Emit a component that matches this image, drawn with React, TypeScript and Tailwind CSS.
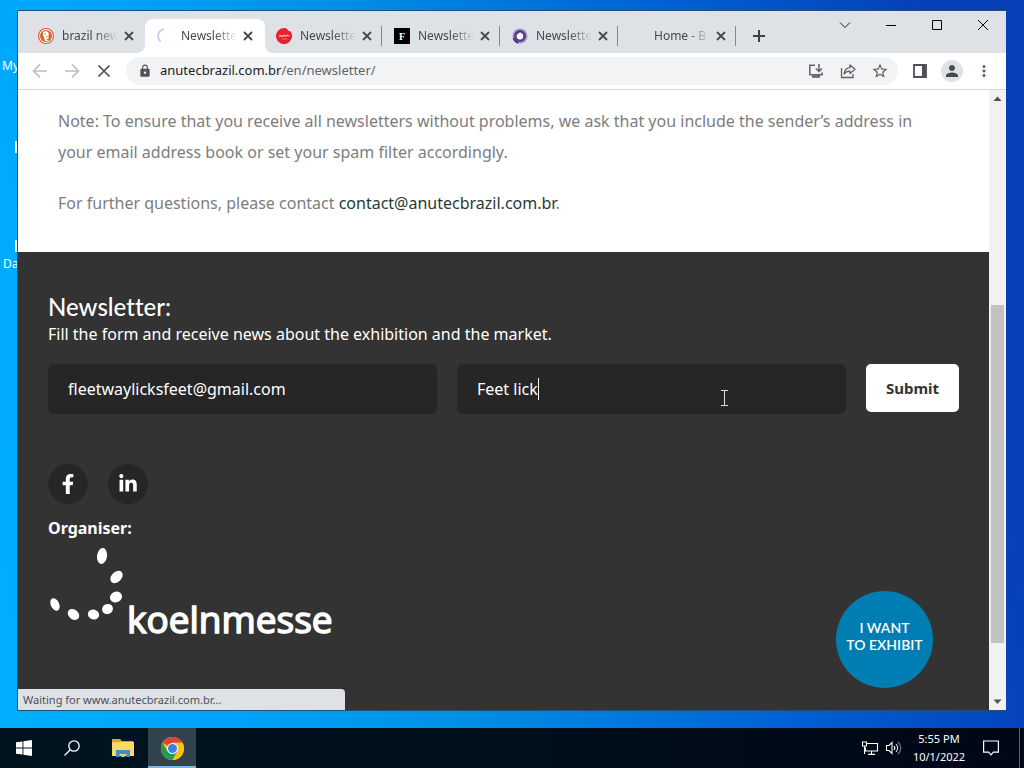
import { useState } from "react"
import type { ReactNode } from "react"
import { FaFacebookF, FaLinkedinIn } from "react-icons/fa"
import { MdLock, MdStarBorder, MdPerson, MdMoreVert } from "react-icons/md"

type Tab = {
  title: string
  icon: ReactNode
  active?: boolean
}

const tabs: Tab[] = [
  { title: "brazil new", icon: <DuckIcon /> },
  { title: "Newslette", icon: <SpinnerIcon />, active: true },
  { title: "Newslette", icon: <RedIcon /> },
  { title: "Newslette", icon: <LetterIcon /> },
  { title: "Newslette", icon: <RingIcon /> },
  { title: "Home - B", icon: null },
]

function DuckIcon() {
  return (
    <svg viewBox="0 0 16 16" className="size-4">
      <circle cx="8" cy="8" r="8" fill="#d9582f" />
      <circle cx="8" cy="8" r="6.9" fill="#fff" />
      <circle cx="8" cy="8" r="6" fill="#d9622f" />
      <path d="M5 5C5.200 3 8.800 2.400 10.300 4.600c.8 1.300.5 3 .1 4.200l.4 3.800c-1.400.9-2.600.9-3.600.4L5.800 9C5 7.600 4.800 6.400 5 5z" fill="#fff" />
      <path d="M7.600 8.200l3.600-.4-.6 1.200-2.800.4z" fill="#f2b632" />
      <path d="M8.600 10.800l2.600.2-.4 1.600-1.800-.4z" fill="#5aa34a" />
      <circle cx="7.200" cy="6" r=".6" fill="#444" />
    </svg>
  )
}

function SpinnerIcon() {
  return (
    <svg viewBox="0 0 16 16" className="size-4" fill="none">
      <path d="M7 1.200A7 7 0 0 0 3.600 13.400" stroke="#b9d3ee" strokeWidth="1.800" />
    </svg>
  )
}

function RedIcon() {
  return (
    <svg viewBox="0 0 16 16" className="size-4">
      <path d="M8 0c2.300 0 3 .6 3.400 1.600.6 1.400 1.800 1.700 3.400 2.200A8 8 0 1 1 8 0z" fill="#e8202f" />
      <path d="M3 8.600l2-1 1.400.8 1.600-1.200 1.600 1 1.800-1 2 .8" stroke="#f9b3b8" strokeWidth="1.300" fill="none" />
      <path d="M6 11h5" stroke="#f07b84" strokeWidth=".8" />
    </svg>
  )
}

function LetterIcon() {
  return (
    <span className="flex size-4 items-center justify-center bg-black font-['Liberation_Serif',serif] text-[10px] font-bold text-white">
      F
    </span>
  )
}

function RingIcon() {
  return (
    <svg viewBox="0 0 16 16" className="size-4">
      <circle cx="8" cy="8" r="7.600" fill="#a99ac6" />
      <circle cx="8" cy="8" r="6" fill="#5b3a8c" />
      <path d="M8 4.200L11.200 6.600l-.4 4L8 11.800 5 10.400 4.600 7z" fill="#fff" />
      <path d="M1.500 10a7 7 0 0 0 5 5" stroke="#3c2470" strokeWidth="1.400" fill="none" />
    </svg>
  )
}

function CloseIcon() {
  return (
    <svg viewBox="0 0 14 14" className="size-3.5" stroke="#45494d" strokeWidth="1.800">
      <path d="M3 3l8 8M11 3l-8 8" />
    </svg>
  )
}

function BrowserTab({ tab }: { tab: Tab }) {
  return (
    <div
      className={
        tab.active
          ? "relative -mr-px ml-px flex h-[34px] w-[120px] shrink-0 items-center rounded-t-lg bg-white pl-3"
          : "flex h-[34px] w-[118px] shrink-0 items-center pl-3"
      }
    >
      {tab.active && (
        <>
          <svg viewBox="0 0 8 8" className="absolute bottom-0 -left-2 size-2">
            <path d="M8 0v8H0a8 8 0 0 0 8-8z" fill="#fff" />
          </svg>
          <svg viewBox="0 0 8 8" className="absolute -right-2 bottom-0 size-2">
            <path d="M0 0v8h8a8 8 0 0 1-8-8z" fill="#fff" />
          </svg>
        </>
      )}
      <span className="mr-2 size-4 shrink-0">{tab.icon}</span>
      <span className="w-14 shrink-0 text-xs whitespace-nowrap text-[#45494d] [mask-image:linear-gradient(to_right,#000_60%,transparent)]">
        {tab.title}
      </span>
      <button aria-label="Close tab" className="ml-1">
        <CloseIcon />
      </button>
    </div>
  )
}

function TabStrip() {
  return (
    <div className="flex h-[42px] items-start bg-[#dee1e6]">
      <div className="flex min-w-0 flex-1 items-center pt-2 pl-2">
        {tabs.map((tab, i) => (
          <div key={i} className="flex shrink-0 items-center">
            <BrowserTab tab={tab} />
            {i > 1 && <span className="-ml-px h-5 w-px bg-[#85898e]" />}
          </div>
        ))}
        <button aria-label="New tab" className="ml-4">
          <svg viewBox="0 0 14 14" className="size-3.5" stroke="#3c4043" strokeWidth="2">
            <path d="M7 1v12M1 7h12" />
          </svg>
        </button>
      </div>
      <div className="flex shrink-0">
        <button aria-label="Search tabs" className="flex h-7 w-[46px] items-center justify-center">
          <svg viewBox="0 0 12 12" className="size-3" fill="none" stroke="#222">
            <path d="M1 3.500l5 5 5-5" />
          </svg>
        </button>
        <button aria-label="Minimize" className="flex h-7 w-[46px] items-center justify-center">
          <svg viewBox="0 0 10 10" className="size-2.5" stroke="#000">
            <path d="M0 5.500h10" />
          </svg>
        </button>
        <button aria-label="Maximize" className="flex h-7 w-[46px] items-center justify-center">
          <svg viewBox="0 0 10 10" className="size-2.5" fill="none" stroke="#000">
            <path d="M.5.5h9v9h-9z" />
          </svg>
        </button>
        <button aria-label="Close" className="flex h-7 w-[46px] items-center justify-center">
          <svg viewBox="0 0 12 12" className="size-3" stroke="#000">
            <path d="M1 1l10 10M11 1L1 11" />
          </svg>
        </button>
      </div>
    </div>
  )
}

function ToolButton({ label, children }: { label: string; children: ReactNode }) {
  return (
    <button aria-label={label} className="flex size-8 shrink-0 items-center justify-center text-[#5f6368]">
      {children}
    </button>
  )
}

function Toolbar() {
  return (
    <div className="flex h-[37px] items-center border-b border-[#d5d7da] bg-white px-1.5">
      <ToolButton label="Back">
        <svg viewBox="0 0 16 16" className="size-4" fill="none" stroke="#bcbec1" strokeWidth="1.700">
          <path d="M15 8H2M8 1.500L1.500 8 8 14.500" />
        </svg>
      </ToolButton>
      <ToolButton label="Forward">
        <svg viewBox="0 0 16 16" className="size-4" fill="none" stroke="#bcbec1" strokeWidth="1.700">
          <path d="M1 8h13M8 1.500L14.500 8 8 14.500" />
        </svg>
      </ToolButton>
      <ToolButton label="Stop">
        <svg viewBox="0 0 14 14" className="size-3.5" stroke="#4d5156" strokeWidth="1.700">
          <path d="M1.500 1.500l11 11M12.500 1.500l-11 11" />
        </svg>
      </ToolButton>
      <div className="mx-1.5 flex h-7 min-w-0 flex-1 items-center rounded-full bg-[#f1f3f4] pr-0.5 pl-3">
        <MdLock className="size-3.5 shrink-0 text-[#505357]" />
        <div className="ml-2 min-w-0 flex-1 truncate text-[13px] text-[#5f6368]">
          <span className="text-[#202124]">anutecbrazil.com.br</span>/en/newsletter/
        </div>
        <ToolButton label="Install">
          <svg viewBox="0 0 16 16" className="size-4" fill="none" stroke="#5f6368" strokeWidth="1.500">
            <path d="M7 2.200H1.800v9.600h12.400V9.500M11 1v7M8 5.500l3 3 3-3" />
            <path d="M4 13.500h8" strokeWidth="2.500" />
          </svg>
        </ToolButton>
        <ToolButton label="Share">
          <svg viewBox="0 0 16 16" className="size-4" fill="none" stroke="#5f6368" strokeWidth="1.300">
            <path d="M1.500 5v9.500h11.500V11" />
            <path d="M10 2l5 4.300-5 4.200V8.200c-2.800 0-4.600.8-6 2.800.4-3.200 2.200-6 6-6.400z" strokeLinejoin="round" />
          </svg>
        </ToolButton>
        <ToolButton label="Bookmark">
          <MdStarBorder className="size-[18px]" />
        </ToolButton>
      </div>
      <ToolButton label="Side panel">
        <svg viewBox="0 0 14 14" className="size-3.5">
          <path d="M1 1h12v12H1z" fill="none" stroke="#4d5156" strokeWidth="1.800" />
          <path d="M9 1h4v12H9z" fill="#4d5156" />
        </svg>
      </ToolButton>
      <ToolButton label="Profile">
        <span className="flex size-[22px] items-center justify-center rounded-full bg-[#dee1e6]">
          <MdPerson className="size-[18px] text-[#474b50]" />
        </span>
      </ToolButton>
      <ToolButton label="Menu">
        <MdMoreVert className="size-[18px]" />
      </ToolButton>
    </div>
  )
}

function Scrollbar() {
  return (
    <div className="flex w-[17px] shrink-0 flex-col items-center bg-[#f1f1f1]">
      <svg viewBox="0 0 17 17" className="size-[17px]">
        <path d="M4.500 11l4-4.500 4 4.500z" fill="#505050" />
      </svg>
      <div className="flex-[198]" />
      <div className="w-[13px] flex-[338] bg-[#c1c1c1]" />
      <div className="flex-[50]" />
      <svg viewBox="0 0 17 17" className="size-[17px]">
        <path d="M4.500 6.500l4 4.500 4-4.500z" fill="#505050" />
      </svg>
    </div>
  )
}

function KoelnmesseLogo() {
  return (
    <svg viewBox="0 0 300 104" className="mt-1 h-[104px] w-[300px]" fill="#fff" role="img" aria-label="koelnmesse">
      <ellipse cx="54" cy="12" rx="5" ry="8" transform="rotate(8 54 12)" />
      <ellipse cx="68.500" cy="33" rx="5" ry="7.200" transform="rotate(45 68.500 33)" />
      <ellipse cx="68" cy="53" rx="6.200" ry="5.300" transform="rotate(-25 68 53)" />
      <ellipse cx="59.500" cy="65" rx="5.500" ry="5" transform="rotate(-20 59.500 65)" />
      <ellipse cx="45.500" cy="70.500" rx="5.700" ry="5" transform="rotate(15 45.500 70.500)" />
      <ellipse cx="25.500" cy="70.500" rx="6.300" ry="4.800" transform="rotate(40 25.500 70.500)" />
      <ellipse cx="7" cy="60.500" rx="4.200" ry="6.500" transform="rotate(-25 7 60.500)" />
      <text
        x="79"
        y="89"
        fontSize="37"
        stroke="#fff"
        strokeWidth="1.500"
        className="font-['Open_Sans',sans-serif] font-normal"
      >
        koelnmesse
      </text>
    </svg>
  )
}

function NewsletterForm() {
  const [email, setEmail] = useState("fleetwaylicksfeet@gmail.com")
  const [name, setName] = useState("Feet lick")

  return (
    <form className="mt-[18px] flex items-start gap-5" onSubmit={(e) => e.preventDefault()}>
      <div className="min-w-0 flex-1">
        <input
          type="email"
          aria-label="E-mail"
          value={email}
          onChange={(e) => setEmail(e.target.value)}
          className="h-[50px] w-full rounded-md bg-[#262626] px-5 text-base text-white outline-none"
        />
      </div>
      <div className="relative min-w-0 flex-1">
        <input
          type="text"
          aria-label="Name"
          value={name}
          onChange={(e) => setName(e.target.value)}
          className="h-[50px] w-full rounded-md bg-[#262626] px-5 text-base text-white outline-none"
        />
        {/* text caret and mouse pointer */}
        <span className="absolute top-3.5 left-[81px] h-[22px] w-px bg-white" />
        <svg viewBox="0 0 7 16" className="absolute top-[26px] left-[264px] h-4 w-[7px]" fill="none" stroke="#ddd">
          <path d="M0 .5h7M0 15.500h7M3.500 0v16" />
        </svg>
      </div>
      <button type="submit" className="h-12 w-[93px] shrink-0 rounded-[5px] bg-white text-[15px] font-bold text-[#333]">
        Submit
      </button>
    </form>
  )
}

function WebPage() {
  return (
    <div className="relative flex min-w-0 flex-1 flex-col">
      <main className="bg-white px-10 pt-4 pb-[33px] text-base leading-[31px] text-[#7d7d7d]">
        <p className="mb-5">
          Note: To ensure that you receive all newsletters without problems, we ask that you include the sender’s address in
          your email address book or set your spam filter accordingly.
        </p>
        <p>
          For further questions, please contact{" "}
          <a href="#contact" className="text-[#263a36]">contact@anutecbrazil.com.br</a>.
        </p>
      </main>
      <footer className="flex-1 bg-[#333] px-[30px] pt-10 text-white">
        <h2 className="font-['Lato',sans-serif] text-2xl leading-[30px] font-medium [font-variant-ligatures:none]">
          Newsletter:
        </h2>
        <p className="text-base leading-6">Fill the form and receive news about the exhibition and the market.</p>
        <NewsletterForm />
        <div className="mt-[50px] flex gap-5">
          <a href="#facebook" aria-label="Facebook" className="flex size-10 items-center justify-center rounded-full bg-[#262626]">
            <FaFacebookF className="size-5" />
          </a>
          <a href="#linkedin" aria-label="LinkedIn" className="flex size-10 items-center justify-center rounded-full bg-[#262626]">
            <FaLinkedinIn className="size-5" />
          </a>
        </div>
        <p className="mt-3 text-base leading-6 font-bold">Organiser:</p>
        <KoelnmesseLogo />
      </footer>
      <a
        href="#exhibit"
        className="absolute right-14 bottom-[22px] flex size-[97px] items-center justify-center rounded-full bg-[#007db3] pb-2 text-center font-['Lato',sans-serif] text-[14px] leading-[17px] font-semibold text-white"
      >
        I WANT
        <br />
        TO EXHIBIT
      </a>
      <div className="absolute bottom-0 left-0 h-[21px] w-[327px] rounded-tr-sm bg-[#dee1e6] px-[5px] text-[11px] leading-[21px] text-[#4d5156]">
        Waiting for www.anutecbrazil.com.br...
      </div>
    </div>
  )
}

function Taskbar() {
  return (
    <div className="flex h-10 shrink-0 items-stretch bg-linear-to-r from-[#00141f] via-[#000f1b] to-[#000716] text-white">
      <button aria-label="Start" className="flex w-12 items-center justify-center">
        <svg viewBox="0 0 16 16" className="size-4" fill="#fff">
          <path d="M0 2.300L6.500 1.400v6.200H0zM7.400 1.200L16 0v7.600H7.400zM0 8.400h6.500v6.200L0 13.700zM7.400 8.400H16V16l-8.600-1.200z" />
        </svg>
      </button>
      <button aria-label="Search" className="flex w-12 items-center justify-center">
        <svg viewBox="0 0 16 16" className="size-4" fill="none" stroke="#fff" strokeWidth="1.300">
          <circle cx="10" cy="6" r="5.200" />
          <path d="M6.300 9.700L.5 15.500" />
        </svg>
      </button>
      <button aria-label="File Explorer" className="ml-0.5 flex w-[50px] items-center justify-center">
        <svg viewBox="0 0 22 18" className="h-[18px] w-[22px]">
          <path d="M0 0h8l2 2h11v4H0z" fill="#dda32c" />
          <path d="M0 3h22v14H0z" fill="#fbd867" />
          <path d="M4 18v-7h14v7h-3.500v-3h-7v3z" fill="#3e8fc8" />
          <path d="M9 18v-2h4v2z" fill="#8cc6e8" />
        </svg>
      </button>
      <button
        aria-label="Google Chrome"
        className="flex w-12 items-center justify-center border-b-2 border-[#76b9ed] bg-[#33434d] pt-0.5"
      >
        <svg viewBox="0 0 24 24" className="size-[23px]">
          <circle cx="12" cy="12" r="12" fill="#fbc116" />
          <path d="M12 12L1.600 6A12 12 0 0 1 22.400 6H12z" fill="#dc4437" />
          <path d="M12 12l5.200 3L12 24A12 12 0 0 1 1.600 6l5.200 9z" fill="#1e9c55" />
          <path d="M12 6h10.400A12 12 0 0 1 12 24l5.200-9z" fill="#fbc116" />
          <circle cx="12" cy="12" r="5.800" fill="#fff" />
          <circle cx="12" cy="12" r="4.700" fill="#3f7ee8" />
        </svg>
      </button>
      <div className="ml-auto flex items-center">
        <svg viewBox="0 0 18 16" className="h-4 w-[18px]" fill="none" stroke="#fff" strokeWidth="1.100">
          <path d="M6 3.500h10.500v7.500h-12V7.500M10.500 11v3M7 14.400h7M1.500 2h4v4h-4zM3.500 6v8" />
        </svg>
        <svg viewBox="0 0 18 16" className="ml-1.5 h-4 w-[18px]" fill="none" stroke="#fff" strokeWidth="1.100">
          <path d="M1.500 5.500H4L7 2.500v11L4 10.500H1.500zM9 6a3 3 0 0 1 0 4M11 4a6 6 0 0 1 0 8" />
          <path d="M13 2a8 8 0 0 1 0 12" stroke="#7a8088" />
        </svg>
        <div className="ml-1 w-16 text-center text-[11px] leading-[18px] whitespace-nowrap">
          <div>5:55 PM</div>
          <div>10/1/2022</div>
        </div>
        <button aria-label="Notifications" className="mx-3">
          <svg viewBox="0 0 16 16" className="size-4" fill="none" stroke="#fff" strokeWidth="1.200">
            <path d="M.6 1h14.800v11.200h-5L8 14.800l-2.400-2.600h-5z" />
          </svg>
        </button>
        <div className="mr-1 ml-2 h-10 w-px bg-[#5a626c]" />
      </div>
    </div>
  )
}

export default function App() {
  return (
    <div className="flex min-h-screen flex-col font-['Noto_Sans',sans-serif]">
      <div className="relative flex flex-1 flex-col bg-[linear-gradient(80deg,#00aeff_0%,#00a4fa_20%,#0090e8_40%,#0062d4_68%,#063fb8_92%)] pt-2.5 pr-[18px] pb-[17px] pl-[17px]">
        {/* desktop shortcuts half hidden by the window */}
        <span className="absolute top-[58px] left-0.5 text-xs leading-4 text-white">My</span>
        <span className="absolute top-[141px] left-[15px] h-3 w-1 bg-[#e8f4fc]" />
        <span className="absolute top-[240px] left-[15px] h-3 w-1 bg-[#e8f4fc]" />
        <span className="absolute top-64 left-[3px] text-xs leading-4 text-white">Da</span>
        <div className="relative flex flex-1 flex-col border border-r-0 border-[#22506f] bg-white">
          <TabStrip />
          <Toolbar />
          <div className="flex flex-1">
            <WebPage />
            <Scrollbar />
          </div>
        </div>
      </div>
      <Taskbar />
    </div>
  )
}
